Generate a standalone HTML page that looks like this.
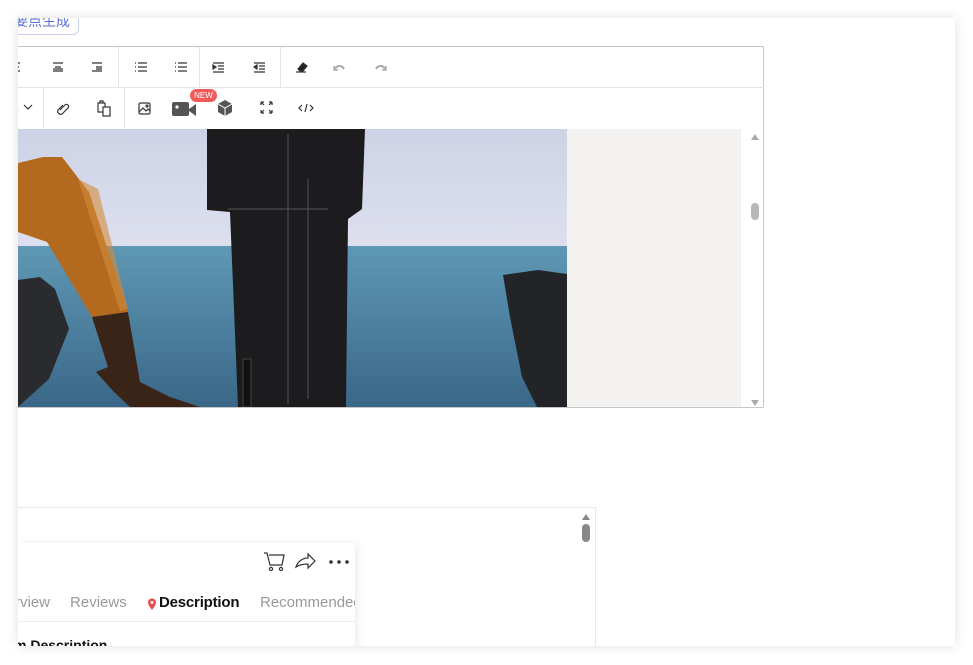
<!DOCTYPE html>
<html><head><meta charset="utf-8"><style>
body{margin:0;width:973px;height:665px;background:#fff;position:relative;overflow:hidden;font-family:"Liberation Sans","Noto Sans CJK SC",sans-serif}
.panel{position:absolute;left:18px;top:18px;width:937px;height:628px;background:#fff;box-shadow:0 0 12px rgba(0,0,0,.12);overflow:hidden}
.abs{position:absolute}
.sep{position:absolute;width:1px;background:#e4e4e4}
svg.i{position:absolute}
</style></head><body>
<div class="panel">
 <div class="abs" style="left:-30px;top:-22px;width:91px;height:39px;border:1px solid #c7cff0;border-radius:6px;color:#5a70d6;font-size:14px;line-height:48px;text-align:right;padding-right:8px;box-sizing:border-box">要点生成</div>
 <div class="abs" style="left:-2px;top:28px;width:748px;height:362px;border:1px solid #c6c6c6;border-radius:2px;box-sizing:border-box"></div>
 <div class="abs" style="left:0;top:69px;width:746px;height:1px;background:#e4e4e4"></div>
 <div class="sep" style="left:100px;top:29px;height:40px"></div>
 <div class="sep" style="left:181px;top:29px;height:40px"></div>
 <div class="sep" style="left:262px;top:29px;height:40px"></div>
 <div class="sep" style="left:25px;top:70px;height:40px"></div>
 <div class="sep" style="left:106px;top:70px;height:40px"></div>
 <svg class="i" style="left:0;top:29px" width="400" height="82" fill="none" stroke="#333" stroke-width="1.2">
  <path d="M-2 16h4M-2 20h3M-2 24h4"/>
  <path d="M35 16h10M37 20h6M35 24h10M35 22h10"/>
  <path d="M74 16h10M78 20h6M74 24h10M78 22h6"/>
  <path d="M117 16h1M117 20h1M117 24h1M120 16h9M120 20h9M120 24h9"/>
  <path d="M157 16h1M157 20h1M157 24h1M160 16h9M160 20h9M160 24h9" />
  <path d="M195 16h11M200 19h6M200 22h6M195 25h11"/><path d="M195 18l3 2-3 2z" fill="#333"/>
  <path d="M236 16h11M241 19h6M241 22h6M236 25h11"/><path d="M239 18l-3 2 3 2z" fill="#333"/>
  <path d="M278 25h10" /><path d="M280 22l5-6 4 3-4 5h-3z" fill="#222"/>
  <path d="M317 22c2-4 7-4 9 0" stroke="#aaa" stroke-width="2"/><path d="M316 19v4h4" stroke="#aaa" stroke-width="1.5"/>
  <path d="M358 22c2-4 7-4 9 0" stroke="#aaa" stroke-width="2"/><path d="M368 19v4h-4" stroke="#aaa" stroke-width="1.5"/>
  <path d="M6 58l4 4 4-4"/>
  <path d="M42 63l5-5a2 2 0 0 1 3 3l-6 6a3 3 0 0 1-4-4l5-5"/>
  <rect x="80" y="56" width="7" height="9"/><rect x="85" y="60" width="7" height="9" fill="#fff"/><path d="M82 56v-2h3v2"/>
  <rect x="121" y="56" width="11" height="11" rx="1.5"/><path d="M121 65l4-4 3 3 2-2 2 2"/><circle cx="129" cy="59" r="1"/>
  <path d="M243 55h3M243 55v3M243 55l3 3M254 55h-3M254 55v3M254 55l-3 3M243 66h3M243 66v-3M243 66l3-3M254 66h-3M254 66v-3M254 66l-3-3"/>
  <path d="M284 58l-3 3 3 3M292 58l3 3-3 3M289 57l-2 8"/>
 </svg>
 <svg class="i" style="left:154px;top:82px" width="30" height="20"><rect x="0" y="2" width="17" height="14" rx="2" fill="#555"/><path d="M17 9l7-5v12l-7-5z" fill="#555"/><circle cx="5" cy="7" r="1.6" fill="#fff"/></svg>
 <div class="abs" style="left:172px;top:71px;width:27px;height:13px;border-radius:7px;background:#f05a5a;color:#fff;font-size:8px;line-height:13px;text-align:center">NEW</div>
 <svg class="i" style="left:198px;top:81px" width="18" height="18"><path d="M9 1l7 4v8l-7 4-7-4V5z" fill="#555"/><path d="M2 5l7 4 7-4M9 9v8" stroke="#fff" stroke-width="1" fill="none"/></svg>
 <div class="abs" style="left:549px;top:111px;width:174px;height:278px;background:#f3f2f1"></div>
 <div class="abs" style="left:723px;top:111px;width:22px;height:278px;background:#fff"></div>
 <div class="abs" style="left:733px;top:185px;width:8px;height:17px;border-radius:4px;background:#b8b8b8"></div>
 <svg class="i" style="left:732px;top:115px" width="10" height="276"><path d="M1 7l4-6 4 6z M1 267l4 6 4-6z" fill="#aaa"/></svg>
 <svg class="i" style="left:0;top:111px" width="549" height="278">
  <defs>
   <linearGradient id="sky" x1="0" y1="0" x2="0" y2="1"><stop offset="0" stop-color="#cdd3e6"/><stop offset="1" stop-color="#dddfee"/></linearGradient>
   <linearGradient id="sea" x1="0" y1="0" x2="0" y2="1"><stop offset="0" stop-color="#5e98b5"/><stop offset="1" stop-color="#3a6787"/></linearGradient>
  </defs>
  <rect width="549" height="117" fill="url(#sky)"/>
  <rect y="117" width="549" height="161" fill="url(#sea)"/>
  <path d="M0 151l22-3 15 12 14 40 -20 50-31 28z" fill="#2a2b2e"/>
  <path d="M485 146l35-5 29 4v133h-30l-15-30-12-60z" fill="#222428"/>
  <path d="M0 34l25-6 19 0 27 35 39 120-36 5-45-75-29-10z" fill="#b36a1f"/>
  <path d="M60 50l20 10 30 120-8 2z" fill="#d48a3a" opacity=".6"/>
  <path d="M74 188l36-5 12 70 30 15 30 10h-70l-16-15-18-20 12-5z" fill="#3a2418"/>
  <path d="M189 0h158l-3 80-14 10-2 188h-108l-8-195-23-2z" fill="#1c1c1e"/>
  <path d="M210 80h100M270 5v270M290 50v220" stroke="#555" stroke-width="1" fill="none"/>
  <rect x="225" y="230" width="8" height="48" fill="#111" stroke="#444"/>
 </svg>
 <div class="abs" style="left:0;top:489px;width:577px;height:140px;border-top:1px solid #e8e8e8;border-right:1px solid #e8e8e8"></div>
 <svg class="i" style="left:563px;top:494px" width="12" height="32"><path d="M1 8l4-6 4 6z" fill="#888"/><rect x="1" y="12" width="8" height="18" rx="4" fill="#888"/></svg>
 <div class="abs" style="left:0;top:525px;width:337px;height:110px;background:#fff;box-shadow:2px 0 8px rgba(0,0,0,.08);overflow:hidden">
  <svg class="i" style="left:246px;top:8px" width="90" height="22" fill="none" stroke="#333" stroke-width="1.2">
   <path d="M0 2h3l3 12h12l2-10H5"/><circle cx="7" cy="18" r="1.6"/><circle cx="17" cy="18" r="1.6"/>
   <path d="M32 16c2-6 7-9 12-9v-4l7 7-7 7v-4c-5 0-9 1-12 3z"/>
   <circle cx="67" cy="11" r="1.8" fill="#333" stroke="none"/><circle cx="75" cy="11" r="1.8" fill="#333" stroke="none"/><circle cx="83" cy="11" r="1.8" fill="#333" stroke="none"/>
  </svg>
  <div class="abs" style="left:-3px;top:51px;font-size:15px;color:#999;white-space:nowrap">rview<span style="margin-left:20px">Reviews</span></div>
  <svg class="i" style="left:129px;top:55px" width="10" height="13"><path d="M5 12C1 7 1 5 1 4.5a4 4 0 0 1 8 0C9 5 9 7 5 12z" fill="#e84b4b"/><circle cx="5" cy="4.5" r="1.5" fill="#fff"/></svg>
  <div class="abs" style="left:141px;top:51px;font-size:15px;font-weight:bold;color:#111;letter-spacing:-0.2px">Description</div>
  <div class="abs" style="left:242px;top:51px;font-size:15px;color:#999;white-space:nowrap">Recommended</div>
  <div class="abs" style="left:0;top:78px;width:337px;height:1px;background:#eee"></div>
  <div class="abs" style="left:-4px;top:94px;font-size:14px;font-weight:bold;color:#111">m Description</div>
 </div>
</div>
</body></html>
